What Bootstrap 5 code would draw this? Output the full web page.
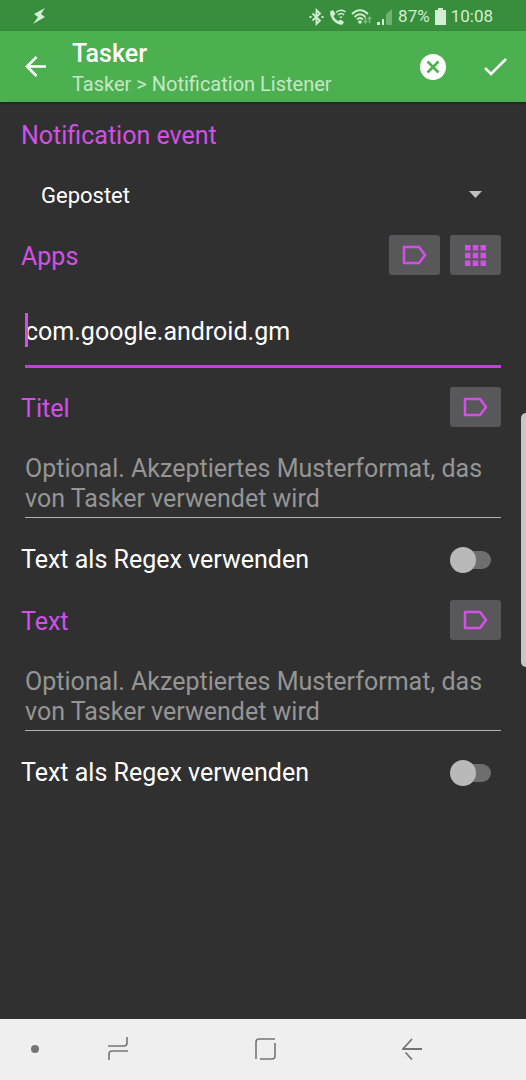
<!DOCTYPE html>
<html lang="de">
<head>
<meta charset="utf-8">
<meta name="viewport" content="width=device-width, initial-scale=1">
<title>Tasker</title>
<link href="https://cdn.jsdelivr.net/npm/bootstrap@5.3.0/dist/css/bootstrap.min.css" rel="stylesheet">
<style>
  :root { --accent: #d250e6; --screen: #303030; }
  body { background: var(--screen); color: #fff; font-family: Roboto, "Liberation Sans", sans-serif; font-size: 25px; line-height: 30px; }
  svg { display: block; flex: none; }

  .status-bar { background: #388e3c; color: #d3edd3; height: 31px; padding: 2px 33px 0 32px; font-size: 17px; line-height: 29px; }
  .status-icons { gap: 5px; }
  .app-bar { background: #4caf50; height: 71px; padding: 0 17px 0 22px; box-shadow: 0 1px 2px #0006; }
  .app-heading { padding: 4px 0 0 22px; }
  .app-title { font-size: 25px; line-height: 31px; font-weight: 500; margin: 0; }
  .app-path { font-size: 20px; line-height: 30px; color: #c3e9c4; margin: 0; }
  .icon-btn { background: none; border: 0; padding: 0; color: #fff; }
  .app-actions { gap: 35px; }

  .form-area { padding: 8px 25px 20px 21px; }
  .section-title { color: var(--accent); font-size: 25px; line-height: 30px; font-weight: 400; margin: 0; padding-top: 3px; }
  .section-first { height: 48px; }
  .section-row { min-height: 40px; }
  .tool-group { gap: 10px; }
  .event-box { margin: 12px 0 15px; }
  .event-select { appearance: none; background: none; border: 0; color: #fff; width: 100%; height: 50px; padding: 2px 50px 0 20px; font-size: 22px; outline: 0; }
  .event-select option { background: #424242; }
  .event-arrow { right: 19px; top: 21px; pointer-events: none; }
  .tool-btn { background: #58585a; border: 0; border-radius: 3px; color: var(--accent); width: 51px; height: 40px; padding: 0; display: flex; align-items: center; justify-content: center; }

  .line-field { display: block; width: 100%; background: none; border: 0; border-radius: 0; color: #fff; padding: 0; outline: 0; }
  .field-box { padding-left: 4px; }
  .app-box { margin: 22px 0 19px; }
  .app-box .line-field { height: 71px; border-bottom: 3px solid #c042d8; caret-color: transparent; }
  .cursor-bar { left: 4px; top: 16px; width: 3px; height: 34px; background: var(--accent); }
  .pattern-box { margin: 27px 0 22px; }
  .pattern-box .line-field { height: 64px; border-bottom: 1px solid #b0b0b0; resize: none; overflow: hidden; }
  .line-field::placeholder { color: #959595; opacity: 1; }

  .switch-row { min-height: 40px; padding-right: 10px; margin-bottom: 20px; }
  .slide-switch { appearance: none; position: relative; width: 41px; height: 26px; margin: 0; flex: none; }
  .slide-switch::before { content: ""; position: absolute; inset: 4px 0 4px 8px; border-radius: 9px; background: #6e6e6e; }
  .slide-switch::after { content: ""; position: absolute; left: 0; top: 0; width: 26px; height: 26px; border-radius: 50%; background: #b9b9b9; }
  .slide-switch:checked::after { left: 15px; background: var(--accent); }

  .edge-handle { position: fixed; right: 0; top: 50%; transform: translateY(-50%); width: 5px; height: 254px; border-radius: 5px 0 0 5px; background: #c6c6c6; }
  .nav-keys { background: #efefef; color: #757575; min-height: 61px; }
  .nav-keys .icon-btn { color: inherit; display: flex; justify-content: center; align-items: center; height: 61px; padding-bottom: 2px; }
  .key-dot { width: 70px; }
  .key-side { width: 96px; }
  .key-home { width: 198px; }
</style>
</head>
<body class="d-flex flex-column min-vh-100">

<div class="status-bar d-flex align-items-center justify-content-between">
  <svg width="15" height="17" viewBox="0 0 15 17" fill="currentColor"><path d="M13 0 2 6l4 3-5 7 12-7-4-3z"/></svg>
  <div class="status-icons d-flex align-items-center">
    <svg width="15" height="18" viewBox="0 0 15 18" fill="none" stroke="currentColor" stroke-width="1.800"><path d="m3.500 5.500 7.500 7-3.500 3.500V2L11 5.500l-7.500 7"/><path d="M.5 9h2M12.500 9h2" /></svg>
    <svg width="17" height="18" viewBox="0 0 17 18"><path fill="currentColor" d="M1 3.500 4 2l2.500 4-2 2c1 2.500 2.500 4 5 5l2-1.500 3.500 2.500-1.500 2.500C10 18 1 13 1 3.500z"/><path fill="none" stroke="currentColor" stroke-width="1.500" d="M7 4.500c3-3 7-3 9.500-.5M9 7c2-2 4-2 6 0M11 9.500c.7-.7 1.300-.7 2 0"/></svg>
    <svg width="21" height="18" viewBox="0 0 21 18"><g fill="none" stroke="currentColor" stroke-width="1.800"><path d="M1 6c5-5 11-5 16 0M3.500 9c3.500-3.500 7.500-3.500 11 0M6 11.500c2-2 4-2 6 0"/></g><circle cx="9" cy="14" r="1.800" fill="currentColor"/><path fill="#7ebd81" d="m14.500 16-2.500-3h1.700V9h1.600v4H17zM18.500 8l-2.500 3h1.700v4h1.600v-4H21z"/></svg>
    <svg width="16" height="18" viewBox="0 0 16 18" fill="currentColor"><path d="M0 14h3v3H0zM5 11h2v6H5z"/><path fill="#6db270" d="M9 6l6-5v16H9z"/></svg>
    <span>87%</span>
    <svg width="11" height="17" viewBox="0 0 11 17" fill="currentColor"><path d="M3 0h5v2h3v15H0V2h3z"/></svg>
    <span>10:08</span>
  </div>
</div>

<header class="app-bar d-flex align-items-center">
  <button class="icon-btn" type="button" aria-label="Zurück">
    <svg width="28" height="28" viewBox="0 0 28 28" fill="none" stroke="currentColor" stroke-width="2.500"><path d="M24 13.500H5M14.500 4 5 13.500l9.500 9.500"/></svg>
  </button>
  <div class="app-heading flex-grow-1">
    <h1 class="app-title">Tasker</h1>
    <p class="app-path">Tasker &gt; Notification Listener</p>
  </div>
  <div class="app-actions d-flex align-items-center">
    <button class="icon-btn" type="button" aria-label="Abbrechen">
      <svg width="26" height="26" viewBox="0 0 26 26"><circle cx="13" cy="13" r="13" fill="#fff"/><path d="m7.500 7.500 11 11m0-11-11 11" stroke="#4caf50" stroke-width="2.600"/></svg>
    </button>
    <button class="icon-btn" type="button" aria-label="Speichern">
      <svg width="28" height="28" viewBox="0 0 28 28" fill="none" stroke="currentColor" stroke-width="2.600"><path d="m4 15 6 6L25 6"/></svg>
    </button>
  </div>
</header>

<main class="form-area flex-grow-1">
  <div class="section-first d-flex align-items-center">
    <label class="section-title" for="event">Notification event</label>
  </div>
  <div class="event-box position-relative">
    <select class="event-select" id="event"><option>Gepostet</option></select>
    <svg class="event-arrow position-absolute" width="13" height="7" viewBox="0 0 13 7"><path d="M0 0h13L6.500 7z" fill="#c1c1c1"/></svg>
  </div>

  <div class="section-row d-flex align-items-center justify-content-between">
    <label class="section-title" for="apps">Apps</label>
    <div class="tool-group d-flex">
      <button class="tool-btn" type="button" aria-label="Variable für Apps"><svg width="25" height="20" viewBox="0 0 25 20" fill="none" stroke="currentColor" stroke-width="2.500" stroke-linejoin="round"><path d="M2 2h15l6 8-6 8H2z"/></svg></button>
      <button class="tool-btn" type="button" aria-label="Apps auswählen"><svg width="21" height="21" viewBox="0 0 21 21" fill="currentColor"><path d="M0 0h5.500v5.500H0zM7.750 0h5.500v5.500h-5.500zM15.500 0H21v5.500h-5.500zM0 7.750h5.500v5.500H0zM7.750 7.750h5.500v5.500h-5.500zM15.500 7.750H21v5.500h-5.500zM0 15.500h5.500V21H0zM7.750 15.500h5.500V21h-5.500zM15.500 15.500H21V21h-5.500z"/></svg></button>
    </div>
  </div>
  <div class="field-box app-box position-relative">
    <input class="line-field" id="apps" type="text" value="com.google.android.gm">
    <span class="cursor-bar position-absolute"></span>
  </div>

  <div class="section-row d-flex align-items-center justify-content-between">
    <label class="section-title" for="titel">Titel</label>
    <button class="tool-btn" type="button" aria-label="Variable für Titel"><svg width="25" height="20" viewBox="0 0 25 20" fill="none" stroke="currentColor" stroke-width="2.500" stroke-linejoin="round"><path d="M2 2h15l6 8-6 8H2z"/></svg></button>
  </div>
  <div class="field-box pattern-box">
    <textarea class="line-field" id="titel" placeholder="Optional. Akzeptiertes Musterformat, das von Tasker verwendet wird"></textarea>
  </div>
  <div class="switch-row d-flex align-items-center justify-content-between">
    <label for="titel-regex">Text als Regex verwenden</label>
    <input class="slide-switch" id="titel-regex" type="checkbox" role="switch">
  </div>

  <div class="section-row d-flex align-items-center justify-content-between">
    <label class="section-title" for="text">Text</label>
    <button class="tool-btn" type="button" aria-label="Variable für Text"><svg width="25" height="20" viewBox="0 0 25 20" fill="none" stroke="currentColor" stroke-width="2.500" stroke-linejoin="round"><path d="M2 2h15l6 8-6 8H2z"/></svg></button>
  </div>
  <div class="field-box pattern-box">
    <textarea class="line-field" id="text" placeholder="Optional. Akzeptiertes Musterformat, das von Tasker verwendet wird"></textarea>
  </div>
  <div class="switch-row d-flex align-items-center justify-content-between">
    <label for="text-regex">Text als Regex verwenden</label>
    <input class="slide-switch" id="text-regex" type="checkbox" role="switch">
  </div>
</main>

<div class="edge-handle"></div>

<nav class="nav-keys d-flex align-items-center">
  <button class="icon-btn key-dot" type="button" aria-label="Leiste ausblenden"><svg width="8" height="8" viewBox="0 0 8 8"><circle cx="4" cy="4" r="4" fill="currentColor"/></svg></button>
  <button class="icon-btn key-side" type="button" aria-label="Letzte Apps"><svg width="20" height="23" viewBox="0 0 20 23" fill="none" stroke="currentColor" stroke-width="1.600"><path d="M0 9h16q3 0 3-3V0M20 14H4q-3 0-3 3v6"/></svg></button>
  <button class="icon-btn key-home" type="button" aria-label="Startseite"><svg width="21" height="22" viewBox="0 0 21 22" fill="none" stroke="currentColor" stroke-width="1.600"><path d="M1 21V4q0-3 3-3h16M20 5v13q0 3-3 3H5"/></svg></button>
  <button class="icon-btn key-side" type="button" aria-label="Zurück"><svg width="20" height="22" viewBox="0 0 20 22" fill="none" stroke="currentColor" stroke-width="1.800"><path d="M20 11H1L10 1M3.500 14.500l6.500 7"/></svg></button>
</nav>

<script src="https://cdn.jsdelivr.net/npm/bootstrap@5.3.0/dist/js/bootstrap.bundle.min.js"></script>
</body>
</html>
